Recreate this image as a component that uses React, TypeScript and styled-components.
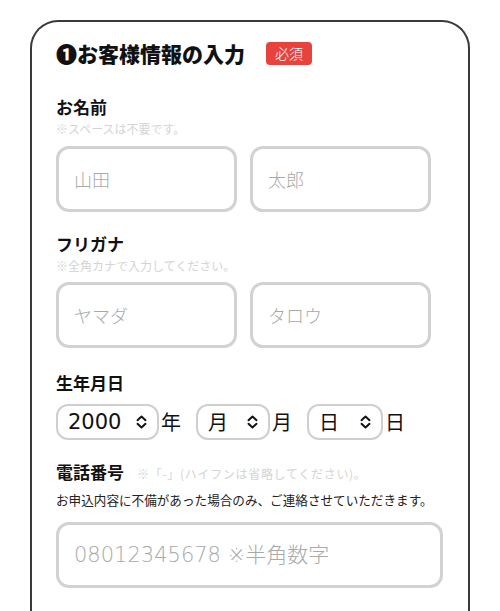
import React from "react";
import styled, { createGlobalStyle } from "styled-components";

const GlobalStyle = createGlobalStyle`
  html, body {
    margin: 0;
    padding: 0;
    background: #fff;
  }
  body {
    font-family: "Noto Sans CJK JP", "Noto Sans", sans-serif;
    color: #111;
  }
  * {
    box-sizing: border-box;
  }
`;

const Page = styled.div`
  width: 500px;
  height: 611px;
  overflow: hidden;
  padding: 20px 30px 0;
`;

const Card = styled.section`
  min-height: 640px;
  border: 2px solid #3a3a3a;
  border-bottom: none;
  border-radius: 28px 28px 0 0;
  padding: 15px 24px 0;
`;

const Heading = styled.div`
  display: flex;
  align-items: center;
  height: 32px;
`;

const HeadingTitle = styled.h2`
  margin: 0;
  font-size: 21px;
  font-weight: 900;
  line-height: 28px;
`;

const RequiredBadge = styled.span`
  margin-left: 21px;
  padding: 0 9px;
  height: 23px;
  line-height: 23px;
  border-radius: 4px;
  background: #e8423f;
  color: #fff;
  font-size: 14px;
  font-weight: 300;
`;

const Field = styled.div<{ $top: number }>`
  margin-top: ${(p) => p.$top}px;
`;

const LabelRow = styled.div`
  display: flex;
  align-items: baseline;
`;

const Label = styled.div`
  font-size: 17px;
  font-weight: bold;
  line-height: 20px;
`;

const Hint = styled.div<{ $inline?: boolean }>`
  font-size: 12px;
  line-height: 13px;
  color: #d4d4d4;
  margin-top: ${(p) => (p.$inline ? "0" : "4.5px")};
  margin-left: ${(p) => (p.$inline ? "13px" : "0")};
  letter-spacing: ${(p) => (p.$inline ? "0.7px" : "0")};
`;

const Note = styled.div`
  margin-top: 10px;
  font-size: 12.6px;
  line-height: 16px;
  color: #222;
`;

const InputRow = styled.div<{ $top: number }>`
  display: flex;
  gap: 13px;
  margin-top: ${(p) => p.$top}px;
`;

const TextInput = styled.input<{ $width: number; $size?: number; $latin?: boolean }>`
  width: ${(p) => p.$width}px;
  height: 66px;
  border: 3px solid #d2d2d2;
  border-radius: 13px;
  padding: 0 0 0 15px;
  font-family: ${(p) => (p.$latin ? '"DejaVu Sans", ' : "")}"Noto Sans CJK JP", sans-serif;
  font-size: ${(p) => p.$size ?? 18}px;
  color: #111;
  background: #fff;
  outline: none;

  &::placeholder {
    color: #a9a9a9;
    font-weight: 300;
  }
`;

const DateRow = styled.div`
  display: flex;
  align-items: center;
  margin-top: 11px;
`;

const SelectBox = styled.div<{ $width: number }>`
  display: flex;
  align-items: center;
  justify-content: space-between;
  width: ${(p) => p.$width}px;
  height: 36px;
  padding: 0 10px 0 10px;
  border: 2px solid #cfcfcf;
  border-radius: 12px;
  color: #111;
`;

const SelectValue = styled.span<{ $latin?: boolean }>`
  font-family: ${(p) => (p.$latin ? '"DejaVu Sans", ' : "")}"Noto Sans CJK JP", sans-serif;
  font-size: ${(p) => (p.$latin ? 21 : 20)}px;
  line-height: 32px;
`;

const Unit = styled.span<{ $gap: number }>`
  margin-left: 2px;
  margin-right: ${(p) => p.$gap}px;
  font-size: 20px;
  line-height: 36px;
`;

const Chevron = () => (
  <svg width="11" height="14" viewBox="0 0 11 14" fill="none">
    <path d="M1.5 5.2 L5.5 1.6 L9.5 5.2" stroke="#111" strokeWidth="2" strokeLinecap="round" strokeLinejoin="round" />
    <path d="M1.5 8.8 L5.5 12.4 L9.5 8.8" stroke="#111" strokeWidth="2" strokeLinecap="round" strokeLinejoin="round" />
  </svg>
);

const DateSelect = ({ value, width, latin }: { value: string; width: number; latin?: boolean }) => (
  <SelectBox $width={width}>
    <SelectValue $latin={latin}>{value}</SelectValue>
    <Chevron />
  </SelectBox>
);

export default function App() {
  return (
    <>
      <GlobalStyle />
      <Page>
        <Card>
          <Heading>
            <HeadingTitle>❶お客様情報の入力</HeadingTitle>
            <RequiredBadge>必須</RequiredBadge>
          </Heading>

          <Field $top={28}>
            <Label>お名前</Label>
            <Hint>※スペースは不要です。</Hint>
            <InputRow $top={11.5}>
              <TextInput $width={181} placeholder="山田" />
              <TextInput $width={181} placeholder="太郎" />
            </InputRow>
          </Field>

          <Field $top={22}>
            <Label>フリガナ</Label>
            <Hint>※全角カナで入力してください。</Hint>
            <InputRow $top={10.5}>
              <TextInput $width={181} placeholder="ヤマダ" />
              <TextInput $width={181} placeholder="タロウ" />
            </InputRow>
          </Field>

          <Field $top={25}>
            <Label>生年月日</Label>
            <DateRow>
              <DateSelect value="2000" width={103} latin />
              <Unit $gap={15}>年</Unit>
              <DateSelect value="月" width={74} />
              <Unit $gap={15}>月</Unit>
              <DateSelect value="日" width={76} />
              <Unit $gap={0}>日</Unit>
            </DateRow>
          </Field>

          <Field $top={22}>
            <LabelRow>
              <Label>電話番号</Label>
              <Hint $inline>※「-」(ハイフンは省略してください)。</Hint>
            </LabelRow>
            <Note>お申込内容に不備があった場合のみ、ご連絡させていただきます。</Note>
            <InputRow $top={14}>
              <TextInput $width={387} $size={21} $latin placeholder="08012345678 ※半角数字" />
            </InputRow>
          </Field>
        </Card>
      </Page>
    </>
  );
}
